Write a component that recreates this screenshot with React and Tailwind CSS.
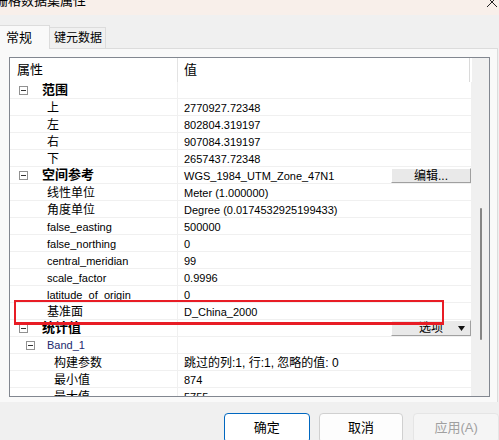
import React from "react";

const rows = [
  { kind: "group", label: "范围" },
  { label: "上", value: "2770927.72348" },
  { label: "左", value: "802804.319197" },
  { label: "右", value: "907084.319197" },
  { label: "下", value: "2657437.72348" },
  { kind: "group", label: "空间参考", value: "WGS_1984_UTM_Zone_47N1", button: "edit" },
  { label: "线性单位", value: "Meter (1.000000)" },
  { label: "角度单位", value: "Degree (0.0174532925199433)" },
  { label: "false_easting", value: "500000" },
  { label: "false_northing", value: "0" },
  { label: "central_meridian", value: "99" },
  { label: "scale_factor", value: "0.9996" },
  { label: "latitude_of_origin", value: "0" },
  { label: "基准面", value: "D_China_2000" },
  { kind: "group", label: "统计值", button: "options" },
  { kind: "band", label: "Band_1" },
  { label: "构建参数", value: "跳过的列:1, 行:1, 忽略的值: 0", deep: true },
  { label: "最小值", value: "874", deep: true },
  { label: "最大值", value: "5755", deep: true },
];

const isLatin = (s) => /^[\x00-\x7f]*$/.test(s);

const Minus = () => (
  <span className="w-[9px] h-[9px] border border-[#919191] bg-white flex items-center justify-center shrink-0">
    <span className="w-[5px] h-px bg-[#333]" />
  </span>
);

const Row = ({ row }) => {
  let label;
  if (row.kind === "group") {
    label = (
      <div className="flex items-center pl-[9px] h-full">
        <Minus />
        <span className="ml-[14px] text-[13px] font-bold leading-[16px] whitespace-nowrap">{row.label}</span>
      </div>
    );
  } else if (row.kind === "band") {
    label = (
      <div className="flex items-center pl-[16px] h-full">
        <Minus />
        <span className="ml-[12px] text-[11px] leading-[16px] text-[#1c2a6e]">{row.label}</span>
      </div>
    );
  } else {
    label = (
      <div className={`flex items-center h-full pt-px ${row.deep ? "pl-[44px]" : "pl-[37px]"}`}>
        <span className={`${isLatin(row.label) ? "text-[11px]" : "text-[12px]"} leading-[16px] whitespace-nowrap`}>
          {row.label}
        </span>
      </div>
    );
  }

  return (
    <div className="h-[17px] shrink-0 flex border-b border-r border-[#f0f0f0]">
      <div className="w-[168px] shrink-0 border-r border-[#f0f0f0]">{label}</div>
      <div className="flex-1 relative flex items-center pl-[6px] pt-px">
        {row.value && (
          <span className={`${isLatin(row.value) ? "text-[11px]" : "text-[12px]"} leading-[16px] whitespace-nowrap`}>
            {row.value}
          </span>
        )}
        {row.button === "edit" && (
          <div className="absolute right-0 top-px h-[15px] w-[80px] bg-[#e9e9e9] border border-t-white border-l-white border-r-[#a0a0a0] border-b-[#a0a0a0] flex items-center justify-center">
            <span className="text-[12px] leading-[14px]">编辑...</span>
          </div>
        )}
        {row.button === "options" && (
          <div className="absolute right-0 top-0 h-[16px] w-[80px] bg-[#e9e9e9] border border-t-white border-l-white border-r-[#a0a0a0] border-b-[#a0a0a0] flex items-center">
            <span className="ml-[27px] text-[12px] leading-[14px]">选项</span>
            <svg className="ml-auto mr-[5px]" width="7" height="5" viewBox="0 0 7 5">
              <path d="M0 0H7L3.5 5Z" fill="#111" />
            </svg>
          </div>
        )}
      </div>
    </div>
  );
};

const App = () => {
  return (
    <div className="w-[499px] h-[440px] bg-[#f0f0f0] overflow-hidden relative text-black font-['Liberation_Sans','Noto_Sans_CJK_SC',sans-serif]">
      {/* Title bar */}
      <div className="h-[15px] bg-[#f8efea] relative overflow-hidden">
        <span className="absolute left-[-5px] top-[-7px] text-[13px] leading-[16px] whitespace-nowrap">栅格数据集属性</span>
        <svg className="absolute left-[486px] top-[-4px]" width="12" height="12" viewBox="0 0 12 12">
          <path d="M1 1L11 11M11 1L1 11" stroke="#222" strokeWidth="1" />
        </svg>
      </div>

      {/* Tabs */}
      <div className="h-[33px] flex items-end">
        <div className="w-[50px] h-[24px] bg-[#f9f9f9] border border-b-0 border-l-0 border-[#dcdcdc] -mb-px relative z-10 flex items-center pl-[6px]">
          <span className="text-[13px] leading-[16px] whitespace-nowrap">常规</span>
        </div>
        <div className="w-[56px] h-[21px] bg-[#f0f0f0] border border-l-0 border-b-0 border-[#dcdcdc] flex items-center pl-[4px]">
          <span className="text-[12px] leading-[16px] whitespace-nowrap">键元数据</span>
        </div>
      </div>

      {/* Panel */}
      <div className="h-[354px] w-[498px] border-t border-r border-[#dcdcdc] bg-[#f9f9f9] pt-[8px] pl-[9px]">
        <div className="w-[481px] h-[340px] border border-[#828790] bg-white flex overflow-hidden">
          <div className="w-[462px] shrink-0 flex flex-col overflow-hidden">
            {/* Header */}
            <div className="h-[24px] shrink-0 flex">
              <div className="w-[168px] shrink-0 border-r border-[#e3e3e3] flex items-center pl-[7px]">
                <span className="text-[13px] leading-[16px]">属性</span>
              </div>
              <div className="w-[292px] border-r border-[#dadada] flex items-center pl-[6px]">
                <span className="text-[13px] leading-[16px]">值</span>
              </div>
            </div>
            {rows.map((row, i) => (
              <Row key={i} row={row} />
            ))}
          </div>
          {/* Scrollbar */}
          <div className="w-[17px] shrink-0 bg-[#f0f0f0] relative">
            <div className="absolute left-[8px] top-[150px] w-[2px] h-[132px] bg-[#858585] rounded-full" />
          </div>
        </div>
      </div>

      {/* Dialog buttons */}
      <div className="flex pt-[11px] pl-[224px]">
        <button className="w-[86px] h-[30px] rounded-[4px] bg-white border border-[#0067c0] text-[13px] leading-[16px]">
          确定
        </button>
        <button className="ml-[9px] w-[85px] h-[30px] rounded-[4px] bg-[#fdfdfd] border border-[#d0d0d0] text-[13px] leading-[16px]">
          取消
        </button>
        <button className="ml-[10px] w-[86px] h-[30px] rounded-[4px] bg-[#f5f5f5] border border-[#e5e5e5] text-[13px] leading-[16px] text-[#a0a0a0]">
          应用(A)
        </button>
      </div>

      {/* Highlight box */}
      <div className="absolute left-[14px] top-[300px] w-[430px] h-[25px] border-2 border-b-[3px] border-[#e81c25] pointer-events-none" />
    </div>
  );
};

export default App;
